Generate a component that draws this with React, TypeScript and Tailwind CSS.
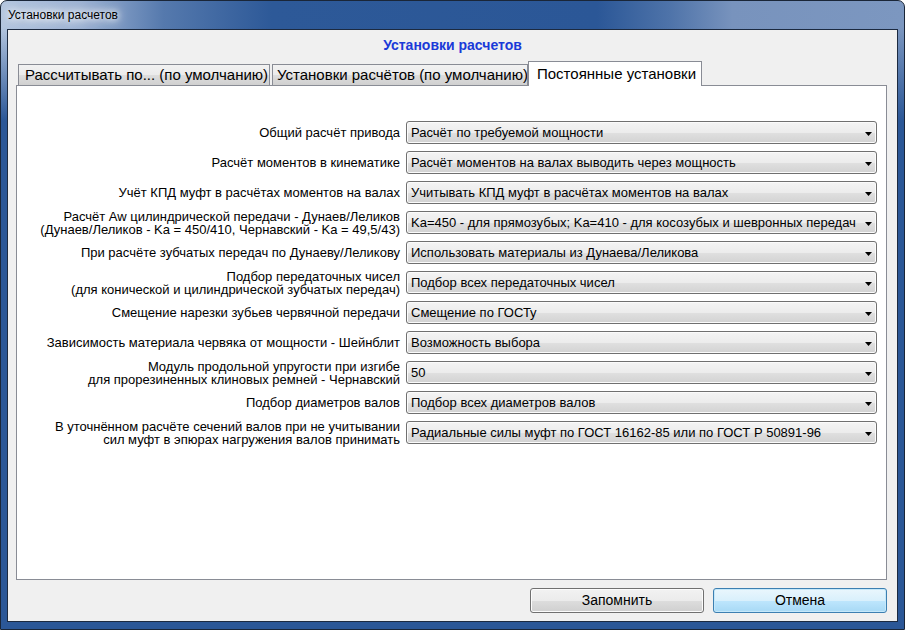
const rows: { label: string[]; value: string }[] = [
  { label: ['Общий расчёт привода'], value: 'Расчёт по требуемой мощности' },
  { label: ['Расчёт моментов в кинематике'], value: 'Расчёт моментов на валах выводить через мощность' },
  { label: ['Учёт КПД муфт в расчётах моментов на валах'], value: 'Учитывать КПД муфт в расчётах моментов на валах' },
  {
    label: ['Расчёт Aw цилиндрической передачи - Дунаев/Леликов', '(Дунаев/Леликов - Ka = 450/410, Чернавский - Ka = 49,5/43)'],
    value: 'Ka=450 - для прямозубых; Ka=410 - для косозубых и шевронных передач',
  },
  { label: ['При расчёте зубчатых передач по Дунаеву/Леликову'], value: 'Использовать материалы из Дунаева/Леликова' },
  {
    label: ['Подбор передаточных чисел', '(для конической и цилиндрической зубчатых передач)'],
    value: 'Подбор всех передаточных чисел',
  },
  { label: ['Смещение нарезки зубьев червячной передачи'], value: 'Смещение по ГОСТу' },
  { label: ['Зависимость материала червяка от мощности - Шейнблит'], value: 'Возможность выбора' },
  {
    label: ['Модуль продольной упругости при изгибе', 'для прорезиненных клиновых ремней - Чернавский'],
    value: '50',
  },
  { label: ['Подбор диаметров валов'], value: 'Подбор всех диаметров валов' },
  {
    label: ['В уточнённом расчёте сечений валов при не учитывании', 'сил муфт в эпюрах нагружения валов принимать'],
    value: 'Радиальные силы муфт по ГОСТ 16162-85 или по ГОСТ Р 50891-96',
  },
]

function Combo({ value }: { value: string }) {
  return (
    <div className="flex h-[23px] w-[471px] shrink-0 items-center rounded-[3px] border border-[#707070] bg-[linear-gradient(to_bottom,#f4f4f4_0%,#ececec_50%,#e0e0e0_51%,#d2d2d2_100%)] pl-[4px] pr-[4px] shadow-[inset_0_0_0_1px_#fbfbfb]">
      <span className="flex-1 overflow-hidden whitespace-nowrap text-[13px] leading-[15px] text-black">{value}</span>
      <svg width="7" height="4" viewBox="0 0 7 4" className="ml-[4px] mt-[3px] shrink-0">
        <path d="M0 0h7L3.5 4z" fill="#000" />
      </svg>
    </div>
  )
}

export default function App() {
  return (
    <div className="h-[630px] w-[905px] overflow-hidden bg-white font-['Liberation_Sans',Arial,sans-serif]">
      <div className="flex h-[630px] w-[905px] flex-col rounded-t-[7px] border border-[#1a2638] bg-[linear-gradient(to_bottom,rgba(43,87,151,0)_26px,#2b5797_120px),linear-gradient(to_right,#b4c6df_0%,#9cb2d3_9%,#5579ad_18%,#2d5998_30%,#2b5797_66%,#4e73a9_74%,#7893bd_81%,#7c97c0_100%)] px-[6px] pb-[7px]">
        {/* Title bar */}
        <div className="flex h-[28px] shrink-0 items-center pl-[1px]">
          <span className="text-[12px] text-black [text-shadow:0_0_6px_#fff,0_0_10px_#fff,0_0_14px_#fff]">Установки расчетов</span>
        </div>

        {/* Client area */}
        <div className="flex flex-1 flex-col border border-[#1c2a40] bg-[#f0f0f0]">
          <div className="flex h-[31px] items-center justify-center">
            <span className="text-[14px] font-bold text-[#1a3ad8]">Установки расчетов</span>
          </div>

          {/* Tabs */}
          <div className="ml-[10px] flex h-[24px] items-end">
            <div className="flex h-[21px] w-[252px] items-center whitespace-nowrap border border-b-0 border-[#898c95] bg-[linear-gradient(to_bottom,#f2f2f2_0%,#ebebeb_50%,#dddddd_51%,#d0d0d0_100%)] pl-[6px] text-[15px] text-black">
              Рассчитывать по... (по умолчанию)
            </div>
            <div className="ml-[2px] flex h-[21px] w-[256px] items-center overflow-hidden whitespace-nowrap border border-b-0 border-[#898c95] bg-[linear-gradient(to_bottom,#f2f2f2_0%,#ebebeb_50%,#dddddd_51%,#d0d0d0_100%)] pl-[4px] text-[15px] text-black">
              Установки расчётов (по умолчанию)
            </div>
            <div className="relative z-10 -mb-px flex h-[25px] w-[174px] items-start whitespace-nowrap border border-b-0 border-[#898c95] bg-white pl-[8px] pt-[1px] text-[15px] text-black">
              Постоянные установки
            </div>
          </div>

          {/* Panel */}
          <div className="ml-[8px] flex h-[495px] w-[871px] flex-col gap-[7px] border border-[#898c95] bg-white pr-[9px] pt-[35px]">
            {rows.map((r, i) => (
              <div key={i} className="flex h-[23px] items-center">
                <div className="flex w-[383px] shrink-0 flex-col items-end text-right text-[13px] leading-[13px] text-black">
                  {r.label.map((l, j) => (
                    <span key={j} className="whitespace-nowrap">{l}</span>
                  ))}
                </div>
                <div className="ml-[6px]">
                  <Combo value={r.value} />
                </div>
              </div>
            ))}
          </div>

          {/* Buttons */}
          <div className="ml-[8px] mt-[8px] flex w-[871px] justify-end gap-[9px]">
            <button className="flex h-[25px] w-[174px] items-center justify-center rounded-[3px] border border-[#707070] bg-[linear-gradient(to_bottom,#f2f2f2_0%,#ebebeb_50%,#dddddd_51%,#cfcfcf_100%)] text-[14px] text-black shadow-[inset_0_0_0_1px_#fcfcfc]">
              Запомнить
            </button>
            <button className="flex h-[25px] w-[174px] items-center justify-center rounded-[3px] border border-[#3c7fb1] bg-[linear-gradient(to_bottom,#eaf6fd_0%,#d9f0fc_50%,#bee6fd_51%,#a7d9f5_100%)] text-[14px] text-black shadow-[inset_0_0_0_1px_#c5e8fa]">
              Отмена
            </button>
          </div>
        </div>
      </div>
    </div>
  )
}
